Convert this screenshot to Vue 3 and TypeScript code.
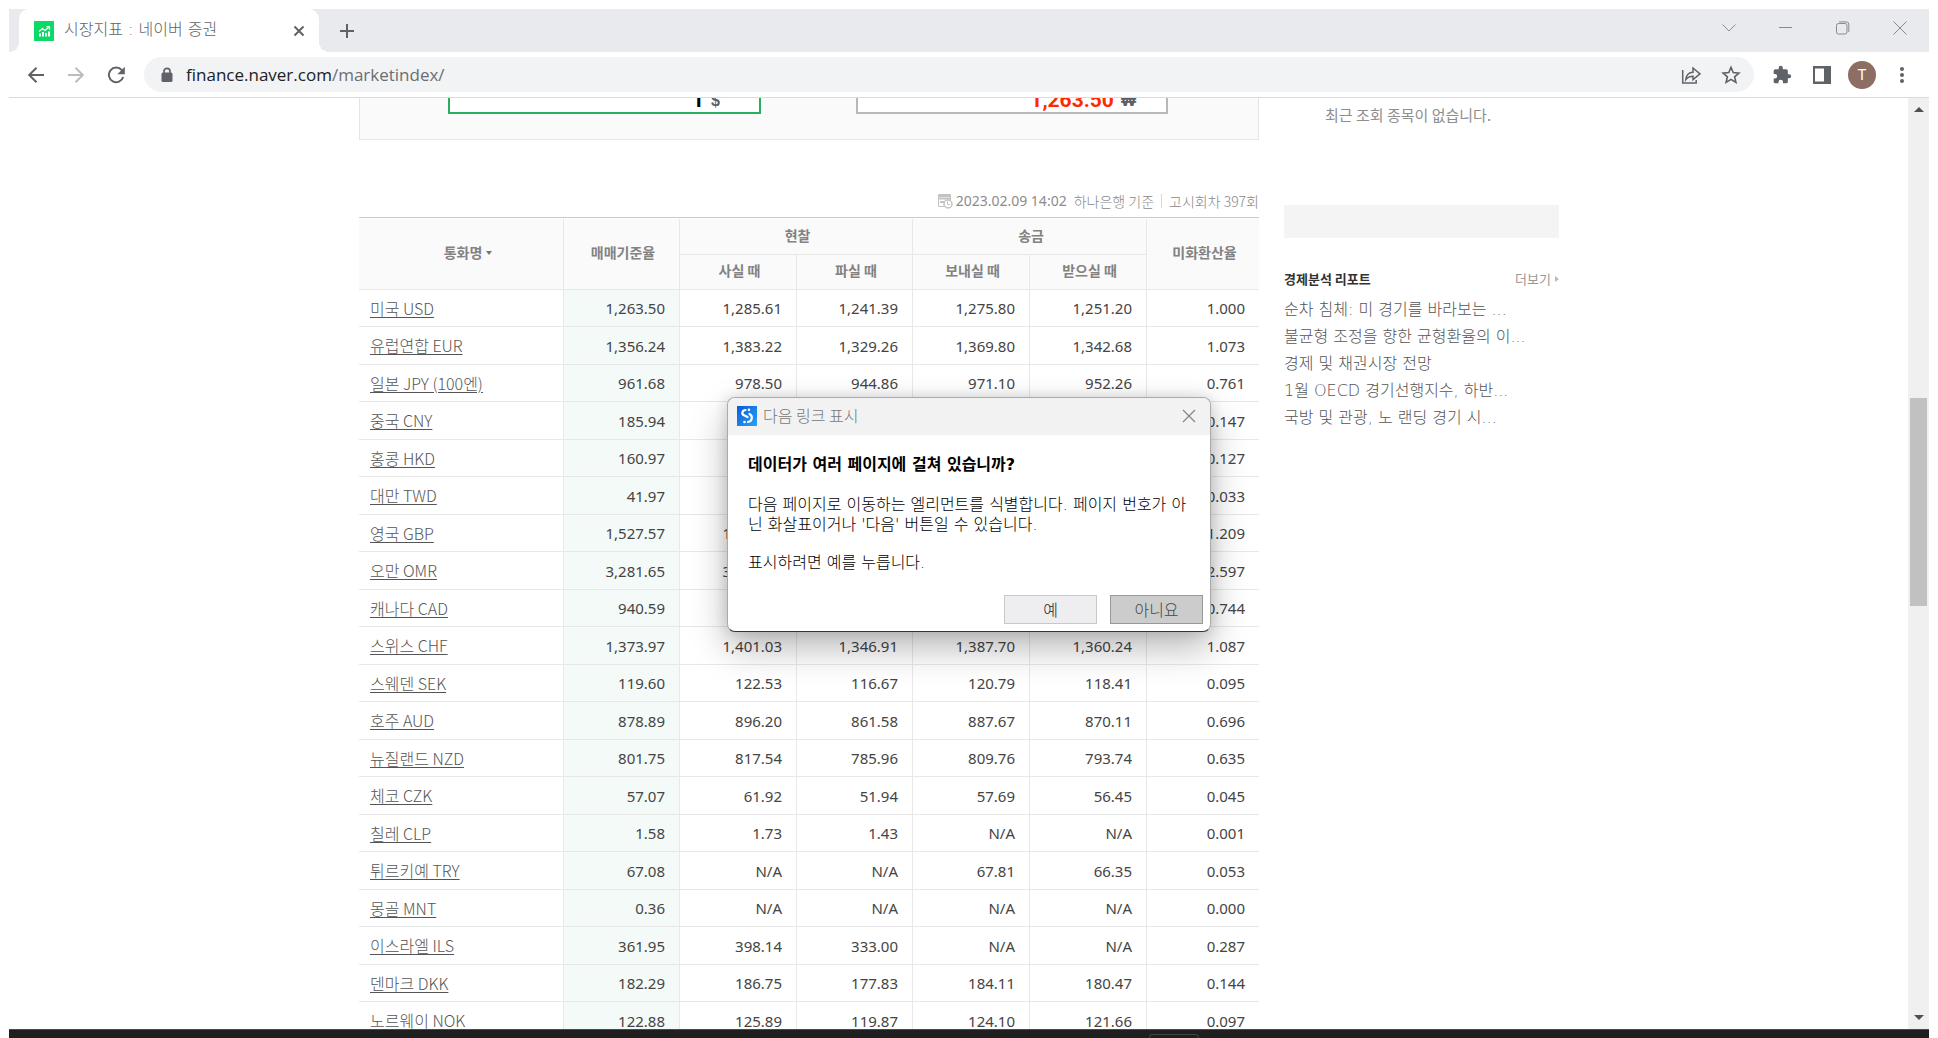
<script setup lang="ts">
interface Rate {
  name: string
  base: string
  cashBuy: string
  cashSell: string
  send: string
  receive: string
  usd: string
}

const row = (name: string, values: string): Rate => {
  const [base, cashBuy, cashSell, send, receive, usd] = values.split(' ')
  return { name, base, cashBuy, cashSell, send, receive, usd }
}

const rates: Rate[] = [
  row('미국 USD', '1,263.50 1,285.61 1,241.39 1,275.80 1,251.20 1.000'),
  row('유럽연합 EUR', '1,356.24 1,383.22 1,329.26 1,369.80 1,342.68 1.073'),
  row('일본 JPY (100엔)', '961.68 978.50 944.86 971.10 952.26 0.761'),
  row('중국 CNY', '185.94 195.23 176.65 187.79 184.09 0.147'),
  row('홍콩 HKD', '160.97 164.14 157.80 162.57 159.37 0.127'),
  row('대만 TWD', '41.97 47.46 39.04 N/A N/A 0.033'),
  row('영국 GBP', '1,527.57 1,557.66 1,497.48 1,542.84 1,512.30 1.209'),
  row('오만 OMR', '3,281.65 3,478.54 3,084.76 N/A N/A 2.597'),
  row('캐나다 CAD', '940.59 959.11 922.07 949.99 931.19 0.744'),
  row('스위스 CHF', '1,373.97 1,401.03 1,346.91 1,387.70 1,360.24 1.087'),
  row('스웨덴 SEK', '119.60 122.53 116.67 120.79 118.41 0.095'),
  row('호주 AUD', '878.89 896.20 861.58 887.67 870.11 0.696'),
  row('뉴질랜드 NZD', '801.75 817.54 785.96 809.76 793.74 0.635'),
  row('체코 CZK', '57.07 61.92 51.94 57.69 56.45 0.045'),
  row('칠레 CLP', '1.58 1.73 1.43 N/A N/A 0.001'),
  row('튀르키예 TRY', '67.08 N/A N/A 67.81 66.35 0.053'),
  row('몽골 MNT', '0.36 N/A N/A N/A N/A 0.000'),
  row('이스라엘 ILS', '361.95 398.14 333.00 N/A N/A 0.287'),
  row('덴마크 DKK', '182.29 186.75 177.83 184.11 180.47 0.144'),
  row('노르웨이 NOK', '122.88 125.89 119.87 124.10 121.66 0.097'),
]

const reports: string[] = [
  '순차 침체: 미 경기를 바라보는 ...',
  '불균형 조정을 향한 균형환율의 이...',
  '경제 및 채권시장 전망',
  '1월 OECD 경기선행지수, 하반...',
  '국방 및 관광, 노 랜딩 경기 시...',
]
</script>

<template>
  <div class="desktop">
    <div class="browser">
      <header class="tabstrip">
        <div class="tab">
          <svg class="favicon" width="20" height="20" viewBox="0 0 20 20">
            <rect width="20" height="20" fill="#0bda66" />
            <path d="M5 15.5v-3h2v3zM8 15.5v-4.500h2v4.500zM11 15.500v-3.500h2v3.500zM14 15.500v-5h2v5z" fill="#fff" />
            <path d="M5 10.500l3.500-3 2.500 2 4-3.500M12.500 5.700h3v3" fill="none" stroke="#fff" stroke-width="1.200" />
          </svg>
          <span class="tab-title">시장지표 : 네이버 증권</span>
          <button class="icon-btn tab-close" aria-label="탭 닫기">
            <svg width="12" height="12" viewBox="0 0 12 12"><path d="M1.500 1.500l9 9M10.500 1.500l-9 9" stroke="#5f6368" stroke-width="2" /></svg>
          </button>
        </div>
        <button class="icon-btn new-tab" aria-label="새 탭">
          <svg width="16" height="16" viewBox="0 0 16 16"><path d="M8 1v14M1 8h14" stroke="#5f6368" stroke-width="2" /></svg>
        </button>
        <div class="window-controls">
          <button class="icon-btn" aria-label="탭 검색">
            <svg width="14" height="14" viewBox="0 0 14 14"><path d="M.5 3.500l6.500 6.500 6.500-6.500" fill="none" stroke="#8a8b8e" /></svg>
          </button>
          <button class="icon-btn" aria-label="최소화">
            <svg width="14" height="14" viewBox="0 0 14 14"><path d="M0 6.500h13" stroke="#8a8b8e" /></svg>
          </button>
          <button class="icon-btn" aria-label="이전 크기로">
            <svg width="14" height="14" viewBox="0 0 14 14" fill="none" stroke="#8a8b8e"><rect x=".5" y="2.500" width="10.500" height="10.500" rx="2" /><path d="M3 .9h7.500a2.300 2.300 0 0 1 2.300 2.300V11" /></svg>
          </button>
          <button class="icon-btn" aria-label="창 닫기">
            <svg width="14" height="14" viewBox="0 0 14 14"><path d="M.5.5l13 13M13.500.5l-13 13" stroke="#8a8b8e" /></svg>
          </button>
        </div>
      </header>

      <nav class="toolbar">
        <button class="icon-btn nav-btn" aria-label="뒤로">
          <svg width="18" height="18" viewBox="0 0 18 18" fill="none" stroke="#5f6368" stroke-width="2"><path d="M17 9H2.500M9.500 1.700L2.200 9l7.300 7.300" /></svg>
        </button>
        <button class="icon-btn nav-btn" aria-label="앞으로">
          <svg width="18" height="18" viewBox="0 0 18 18" fill="none" stroke="#babcbe" stroke-width="2"><path d="M1 9h14.500M8.500 1.700L15.800 9l-7.300 7.300" /></svg>
        </button>
        <button class="icon-btn nav-btn" aria-label="새로고침">
          <svg width="18" height="18" viewBox="0 0 18 18"><path d="M14.800 4.200A7.300 7.300 0 1 0 16.200 11" fill="none" stroke="#5f6368" stroke-width="2" /><path d="M17.800.8v7.400h-7.400z" fill="#5f6368" /></svg>
        </button>
        <div class="omnibox">
          <svg class="lock" width="12" height="16" viewBox="0 0 12 16"><path d="M3 6V4.300a3 3 0 0 1 6 0V6" fill="none" stroke="#5f6368" stroke-width="1.700" /><rect x=".5" y="5.500" width="11" height="9.500" rx="1.500" fill="#5f6368" /></svg>
          <span class="url">finance.naver.com<span class="path">/marketindex/</span></span>
          <button class="icon-btn omni-btn" aria-label="공유">
            <svg width="20" height="20" viewBox="0 0 20 20" fill="none" stroke="#5f6368" stroke-width="1.500"><path d="M1.700 5v13h13.500v-3" /><path d="M4.800 14.500c.5-4.500 3-7 7.200-7.200V3l7 5.800-7 5.800v-3.400c-3.200 0-5.500 1-7.200 3.300z" /></svg>
          </button>
          <button class="icon-btn omni-btn" aria-label="북마크">
            <svg width="20" height="20" viewBox="0 0 20 20"><path d="M10 2.300l2.200 5.300 5.700.5-4.300 3.700 1.300 5.600L10 14.400l-4.900 3 1.300-5.600L2.100 8.100l5.700-.5z" fill="none" stroke="#5f6368" stroke-width="1.600" /></svg>
          </button>
        </div>
        <button class="icon-btn nav-btn" aria-label="확장 프로그램">
          <svg width="20" height="20" viewBox="0 0 24 24"><path d="M20.500 11H19V7a2 2 0 0 0-2-2h-4V3.500a2.500 2.500 0 0 0-5 0V5H4a2 2 0 0 0-2 2v3.800h1.500a2.700 2.700 0 0 1 0 5.400H2V20a2 2 0 0 0 2 2h3.800v-1.500a2.700 2.700 0 0 1 5.400 0V22H17a2 2 0 0 0 2-2v-4h1.500a2.500 2.500 0 0 0 0-5z" fill="#5f6368" /></svg>
        </button>
        <button class="icon-btn nav-btn" aria-label="측면 패널">
          <svg width="18" height="18" viewBox="0 0 18 18"><path d="M0 0h18v18H0zM2 2.500v13h9v-13z" fill="#5f6368" fill-rule="evenodd" /></svg>
        </button>
        <button class="icon-btn nav-btn" aria-label="프로필"><span class="avatar">T</span></button>
        <button class="icon-btn nav-btn" aria-label="메뉴">
          <svg width="4" height="18" viewBox="0 0 4 18" fill="#5f6368"><circle cx="2" cy="3" r="2" /><circle cx="2" cy="9" r="2" /><circle cx="2" cy="15" r="2" /></svg>
        </button>
      </nav>

      <div class="viewport">
        <div class="page">
          <main class="main">
            <section class="calculator">
              <div class="amount from">
                <input class="amount-input" value="1" aria-label="환전 금액" />
                <span class="unit">$</span>
              </div>
              <div class="amount to">
                <input class="amount-input" value="1,263.50" aria-label="환산 금액" />
                <span class="unit won">₩</span>
              </div>
            </section>

            <div class="info">
              <svg width="16" height="16" viewBox="0 0 16 16" fill="none" stroke="#c3c3c3"><path d="M7 13.500H1.500v-12h12V7" /><path d="M1.500 3h12M1.500 5.500h12M3 9h4" stroke-width="2" /><circle cx="11" cy="11" r="4" stroke-width="1.500" fill="#fff" /><path d="M10.500 8.500v3H13" /></svg>
              <span class="date">2023.02.09 14:02</span>
              <span class="bank">하나은행 기준</span>
              <span class="round">고시회차 397회</span>
            </div>

            <table class="rates">
              <colgroup>
                <col class="c-name" /><col class="c-base" /><col class="c-wide" /><col class="c-base" />
                <col class="c-wide" /><col class="c-wide" /><col class="c-usd" />
              </colgroup>
              <thead>
                <tr class="head-top">
                  <th rowspan="2" scope="col" class="sortable">통화명<span class="caret"></span></th>
                  <th rowspan="2" scope="col">매매기준율</th>
                  <th colspan="2" scope="colgroup">현찰</th>
                  <th colspan="2" scope="colgroup">송금</th>
                  <th rowspan="2" scope="col">미화환산율</th>
                </tr>
                <tr class="head-sub">
                  <th scope="col">사실 때</th>
                  <th scope="col">파실 때</th>
                  <th scope="col">보내실 때</th>
                  <th scope="col">받으실 때</th>
                </tr>
              </thead>
              <tbody>
                <tr v-for="r in rates" :key="r.name">
                  <td class="name"><a href="#">{{ r.name }}</a></td>
                  <td class="base">{{ r.base }}</td>
                  <td>{{ r.cashBuy }}</td>
                  <td>{{ r.cashSell }}</td>
                  <td>{{ r.send }}</td>
                  <td>{{ r.receive }}</td>
                  <td>{{ r.usd }}</td>
                </tr>
              </tbody>
            </table>
          </main>

          <aside class="side">
            <p class="recent">최근 조회 종목이 없습니다.</p>
            <div class="strip"></div>
            <div class="side-head">
              <h2>경제분석 리포트</h2>
              <a href="#" class="more">더보기<span class="more-arrow"></span></a>
            </div>
            <ul class="reports">
              <li v-for="r in reports" :key="r"><a href="#">{{ r }}</a></li>
            </ul>
          </aside>
        </div>

        <div class="scrollbar">
          <span class="arrow up"></span>
          <span class="above"></span>
          <span class="thumb"></span>
          <span class="below"></span>
          <span class="arrow down"></span>
        </div>
      </div>
    </div>

    <div class="taskbar"><span class="task"></span></div>

    <div class="dialog" role="dialog" aria-labelledby="dialog-title">
      <div class="dialog-bar">
        <svg width="20" height="20" viewBox="0 0 20 20">
          <defs><linearGradient id="dialog-icon" x1="0" y1="0" x2="1" y2="1"><stop offset="0" stop-color="#0a5cd8" /><stop offset="1" stop-color="#2aa2f6" /></linearGradient></defs>
          <rect width="20" height="20" fill="url(#dialog-icon)" />
          <path d="M8.500 4C4.500 4.500 4.500 8.500 7.500 9.500l3 1.500M12.500 8c3.500 1.500 3 7.500-1.500 8" fill="none" stroke="#fff" stroke-width="2.200" stroke-linecap="round" />
          <circle cx="12" cy="3.700" r="1.300" fill="#fff" /><circle cx="7.500" cy="16" r="1.300" fill="#fff" />
        </svg>
        <span id="dialog-title" class="dialog-title">다음 링크 표시</span>
        <button class="icon-btn dialog-close" aria-label="닫기">
          <svg width="14" height="14" viewBox="0 0 14 14"><path d="M1 1l12 12M13 1L1 13" stroke="#858585" stroke-width="1.200" /></svg>
        </button>
      </div>
      <div class="dialog-body">
        <p class="question">데이터가 여러 페이지에 걸쳐 있습니까?</p>
        <p>다음 페이지로 이동하는 엘리먼트를 식별합니다. 페이지 번호가 아<br />닌 화살표이거나 '다음' 버튼일 수 있습니다.</p>
        <p>표시하려면 예를 누릅니다.</p>
      </div>
      <div class="dialog-actions">
        <button class="action">예</button>
        <button class="action no">아니요</button>
      </div>
    </div>
  </div>
</template>

<style>
body {
  margin: 0;
  background: #fff;
}
</style>

<style scoped>
.desktop {
  position: relative;
  display: flex;
  flex-direction: column;
  box-sizing: border-box;
  height: 100vh;
  padding: 9px 9px 0;
  overflow: hidden;
  font-family: "Noto Sans CJK KR", sans-serif;
  color: #555;
}
.browser {
  flex: 1;
  min-height: 0;
  display: flex;
  flex-direction: column;
}
.icon-btn {
  display: flex;
  align-items: center;
  justify-content: center;
  padding: 0;
  border: 0;
  background: none;
}

/* tab strip */
.tabstrip {
  display: flex;
  height: 43px;
  padding: 0 1px 0 10px;
  background: #e8eaed;
}
.tab {
  position: relative;
  display: flex;
  align-items: center;
  box-sizing: border-box;
  width: 300px;
  padding: 0 12px 0 15px;
  border-radius: 10px 10px 0 0;
  background: #fff;
}
.tab::before,
.tab::after {
  content: "";
  position: absolute;
  bottom: 0;
  width: 10px;
  height: 10px;
}
.tab::before {
  left: -10px;
  background: radial-gradient(circle at 0 0, #e8eaed 10px, #fff 10px);
}
.tab::after {
  right: -10px;
  background: radial-gradient(circle at 100% 0, #e8eaed 10px, #fff 10px);
}
.tab-title {
  flex: 1;
  margin-left: 10px;
  padding-bottom: 2px;
  font: 300 16px/20px "DejaVu Sans", "Noto Sans CJK KR", sans-serif;
  color: #5f6368;
}
.tab-close {
  width: 16px;
}
.new-tab {
  width: 56px;
}
.window-controls {
  display: flex;
  margin-left: auto;
}
.window-controls .icon-btn {
  width: 57px;
  height: 38px;
}

/* toolbar */
.toolbar {
  display: flex;
  align-items: center;
  height: 45px;
  padding: 0 7px;
  border-bottom: 1px solid #d9dbde;
}
.nav-btn {
  width: 40px;
  height: 34px;
}
.omnibox {
  flex: 1;
  display: flex;
  align-items: center;
  height: 35px;
  margin: 0 8px;
  padding: 0 3px 0 17px;
  border-radius: 18px;
  background: #f1f3f4;
}
.url {
  flex: 1;
  margin-left: 13px;
  font: 17px/24px "Open Sans", "Noto Sans", sans-serif;
  color: #202124;
}
.path {
  color: #6b6e72;
}
.omni-btn {
  width: 40px;
}
.avatar {
  width: 28px;
  border-radius: 50%;
  background: #8d6e63;
  color: #fff;
  font: 15px/28px Roboto, sans-serif;
}

/* page */
.viewport {
  flex: 1;
  min-height: 0;
  display: flex;
  overflow: hidden;
}
.page {
  flex: 1;
  display: flex;
  justify-content: center;
  gap: 25px;
  padding-left: 1px;
}
.main {
  width: 900px;
}
.calculator {
  display: flex;
  gap: 95px;
  box-sizing: border-box;
  height: 42px;
  padding-left: 88px;
  border: 1px solid #e5e5e5;
  border-top: 0;
  background: #fafafa;
}
.amount {
  display: flex;
  align-items: flex-end;
  box-sizing: border-box;
  width: 313px;
  height: 16px;
  padding-right: 39px;
  border: 2px solid #27ae60;
  border-top: 0;
  background: #fff;
  overflow: hidden;
}
.amount.to {
  width: 312px;
  padding-right: 30px;
  border-color: #b8b8b8;
}
.amount-input {
  flex: 1;
  min-width: 0;
  height: 24px;
  padding: 0;
  border: 0;
  background: none;
  text-align: right;
  font: bold 21px/24px Roboto, "Liberation Sans", sans-serif;
  color: #000;
}
.to .amount-input {
  color: #ff2a00;
}
.unit {
  margin-left: 7px;
  font: bold 16px/22px "Liberation Sans", sans-serif;
  color: #5a5e66;
}
.info {
  display: flex;
  align-items: center;
  justify-content: flex-end;
  height: 20px;
  margin: 51px 0 6px;
  font-size: 14px;
  font-weight: 300;
  line-height: 20px;
  color: #888;
}
.date {
  margin-left: 3px;
  font: 14px/20px "Noto Sans", sans-serif;
  color: #8c8c8c;
}
.bank {
  margin-left: 7px;
}
.round {
  margin-left: 7px;
  padding-left: 7px;
  border-left: 1px solid #d8d8d8;
  line-height: 14px;
}

/* rate table */
.rates {
  width: 900px;
  padding-top: 1px;
  border-top: 1px solid #c8c8c8;
  border-spacing: 0;
  table-layout: fixed;
}
.c-name { width: 205px; }
.c-base { width: 116px; }
.c-wide { width: 117px; }
.c-usd { width: 112px; }
.rates th,
.rates td {
  box-sizing: border-box;
  padding: 0;
  border: 0 solid #e8e8e8;
  border-width: 0 1px 1px 0;
}
.rates th {
  padding: 0 0 4px 3px;
  background: #fafafa;
  font-size: 14px;
  line-height: 20px;
  font-weight: bold;
  color: #828282;
}
.rates .sortable {
  padding-left: 14px;
}
.rates .head-top { height: 36px; }
.rates .head-sub { height: 35px; }
.rates .head-top th:last-child,
.rates td:last-child {
  border-right: 0;
}
.caret {
  display: inline-block;
  margin-left: 4px;
  border: 3px solid transparent;
  border-top: 4px solid #777;
  border-bottom: 0;
  vertical-align: 3px;
}
.rates tbody tr { height: 37px; }
.rates tbody tr:nth-child(even) { height: 38px; }
.rates td {
  padding-right: 14px;
  text-align: right;
  font: 15px/20px "Noto Sans", sans-serif;
  color: #444;
}
.rates .base {
  background: #f4faf7;
}
.rates .name {
  padding: 0 0 1px 11px;
  text-align: left;
  font: 300 16px/20px "Noto Sans CJK KR", sans-serif;
}
.name a {
  color: #555;
  text-underline-offset: 2px;
}

/* sidebar */
.side {
  width: 275px;
}
.recent {
  margin: 7px 0 0 41px;
  font-size: 15px;
  line-height: 20px;
  color: #8e8e8e;
}
.strip {
  height: 33px;
  margin-top: 80px;
  background: #f4f4f4;
}
.side-head {
  display: flex;
  align-items: center;
  justify-content: space-between;
  height: 20px;
  margin-top: 31px;
}
.side-head h2 {
  margin: 0;
  font-size: 13px;
  line-height: 20px;
  color: #333;
}
.more {
  display: flex;
  align-items: center;
  gap: 4px;
  font-size: 13px;
  line-height: 20px;
  color: #999;
  text-decoration: none;
}
.more-arrow {
  border: 3px solid transparent;
  border-left: 4px solid #bbb;
  border-right: 0;
}
.reports {
  margin: 7px 0 0;
  padding: 0;
  list-style: none;
  font: 300 16px/27px "DejaVu Sans", "Noto Sans CJK KR", sans-serif;
  white-space: nowrap;
}
.reports li {
  height: 27px;
}
.reports a {
  color: #555;
  text-decoration: none;
}

/* scrollbar */
.scrollbar {
  display: flex;
  flex-direction: column;
  align-items: center;
  width: 21px;
  background: #f0f0f0;
}
.arrow {
  margin: 9px 0;
  border: 5px solid transparent;
}
.arrow.up {
  border-top: 0;
  border-bottom-color: #505050;
}
.arrow.down {
  border-bottom: 0;
  border-top-color: #505050;
}
.above { flex: 277; }
.below { flex: 400; }
.thumb {
  width: 17px;
  height: 208px;
  background: #c1c1c1;
}

.taskbar {
  display: flex;
  justify-content: center;
  box-sizing: border-box;
  height: 9px;
  padding-left: 409px;
  border-top: 1px solid #4a4a4a;
  background: #1f1f1f;
}
.task {
  width: 48px;
  margin-top: 4px;
  border: 1px solid #444;
  border-bottom: 0;
  border-radius: 4px 4px 0 0;
}

/* dialog */
.dialog {
  position: absolute;
  top: 397px;
  left: calc(50% - 242px);
  box-sizing: border-box;
  width: 484px;
  border: 1px solid #aaa;
  border-bottom-color: #333;
  border-radius: 8px;
  background: #fff;
  box-shadow: 0 16px 36px rgba(0, 0, 0, 0.28), 0 0 14px rgba(0, 0, 0, 0.14);
  overflow: hidden;
}
.dialog-bar {
  display: flex;
  align-items: center;
  box-sizing: border-box;
  height: 37px;
  padding: 0 14px 2px 9px;
  background: #f2f2f2;
}
.dialog-title {
  flex: 1;
  margin-left: 6px;
  padding-bottom: 2px;
  font-size: 16px;
  font-weight: 300;
  line-height: 20px;
  color: #777;
}
.dialog-body {
  padding: 20px 0 0 20px;
  font: 300 16px/20px "DejaVu Sans", "Noto Sans CJK KR", sans-serif;
  color: #000;
  white-space: nowrap;
}
.dialog-body p {
  margin: 0 0 18px;
}
.dialog-body .question {
  margin-bottom: 20px;
  font-weight: bold;
}
.dialog-actions {
  display: flex;
  justify-content: flex-end;
  gap: 13px;
  padding: 4px 7px 7px 0;
}
.action {
  box-sizing: border-box;
  width: 93px;
  height: 29px;
  padding: 0 0 2px;
  border: 1px solid #c8c8c8;
  background: #eeeef0;
  font: 300 16px/20px "Noto Sans CJK KR", sans-serif;
  color: #222;
}
.action.no {
  border-color: #989898;
  background: #ccc;
  color: #444;
}
</style>
